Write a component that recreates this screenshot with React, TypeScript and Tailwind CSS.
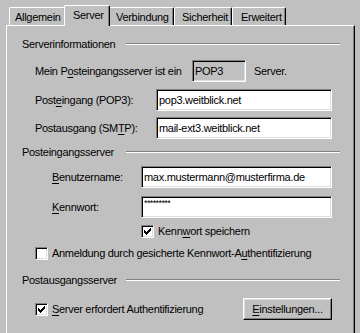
import type { ReactNode } from 'react';

const sunken =
  'border border-t-[#808080] border-l-[#808080] border-r-white border-b-white shadow-[inset_1px_1px_0_#000,inset_-1px_-1px_0_#dfdfdf]';

function U({ children }: { children: ReactNode }) {
  return <span className="underline underline-offset-[2px]">{children}</span>;
}

function Tab({ label, pl, w, active }: { label: string; pl: string; w: string; active?: boolean }) {
  if (active) {
    return (
      <div
        className={`relative z-10 -mx-[2px] -mb-[1px] h-[21px] ${w} ${pl} rounded-t-[2px] border-t border-l border-r border-t-white border-l-white border-r-black bg-[#c0c0c0] pt-[1px] shadow-[inset_-1px_0_0_#808080]`}
      >
        <span className="leading-[14px]">{label}</span>
      </div>
    );
  }
  return (
    <div
      className={`h-[18px] ${w} ${pl} rounded-t-[2px] border-t border-l border-r border-t-white border-l-white border-r-black pt-[1px] shadow-[inset_-1px_0_0_#808080]`}
    >
      <span className="leading-[14px]">{label}</span>
    </div>
  );
}

function Heading({ children, mt }: { children: ReactNode; mt: string }) {
  return (
    <div className={`${mt} flex h-[14px] items-center pl-[15px] pr-[14px]`}>
      <span className="w-[104px] shrink-0 leading-[14px]">{children}</span>
      <div className="h-0 flex-1 border-t border-b border-t-[#808080] border-b-white" />
    </div>
  );
}

function Field({ value, w, small }: { value: string; w: string; small?: boolean }) {
  return (
    <div className={`flex h-[22px] ${w} items-center bg-white pl-[2px] ${sunken}`}>
      {small ? (
        <span className="self-start pt-[2px] text-[9px] leading-[9px] tracking-[-0.6px]">{value}</span>
      ) : (
        <span>{value}</span>
      )}
    </div>
  );
}

function Check({ checked }: { checked?: boolean }) {
  return (
    <div className={`h-[13px] w-[13px] shrink-0 bg-white ${sunken}`}>
      {checked && (
        <svg width="11" height="11" viewBox="0 0 11 11" shapeRendering="crispEdges">
          <path
            d="M2 4h1v3h-1z M3 5h1v3h-1z M4 6h1v3h-1z M5 5h1v3h-1z M6 4h1v3h-1z M7 3h1v3h-1z M8 2h1v3h-1z"
            fill="#000"
          />
        </svg>
      )}
    </div>
  );
}

export default function App() {
  return (
    <div className="h-[333px] w-[360px] overflow-hidden bg-[#c0c0c0] font-['Liberation_Sans',Arial,sans-serif] text-[11px] tracking-[-0.3px] text-black">
      <div className="ml-[6px] mr-[5px] pt-[5px]">
        {/* tab strip */}
        <div className="flex h-[20px] items-end pl-[3px]">
          <Tab label="Allgemein" w="w-[57px]" pl="pl-[5px]" />
          <Tab label="Server" w="w-[46px]" pl="pl-[8px]" active />
          <Tab label="Verbindung" w="w-[66px]" pl="pl-[7px]" />
          <Tab label="Sicherheit" w="w-[58px]" pl="pl-[7px]" />
          <Tab label="Erweitert" w="w-[54px]" pl="pl-[8px]" />
        </div>

        <div className="h-[320px] border-t border-l border-r border-t-white border-l-white border-r-black shadow-[inset_-1px_0_0_#808080]">
          <Heading mt="mt-[11px]">Serverinformationen</Heading>

          <div className="mt-[9px] flex h-[22px] items-center pl-[28px]">
            <span className="w-[157px] shrink-0">
              Mein P<U>o</U>steingangsserver ist ein
            </span>
            <div className={`flex h-[22px] w-[54px] items-center pl-[2px] ${sunken}`}>POP3</div>
            <span className="ml-[8px]">Server.</span>
          </div>

          <div className="mt-[7px] flex items-center pl-[28px]">
            <span className="w-[121px] shrink-0">
              Post<U>e</U>ingang (POP3):
            </span>
            <Field value="pop3.weitblick.net" w="w-[176px]" />
          </div>

          <div className="mt-[6px] flex items-center pl-[28px]">
            <span className="w-[121px] shrink-0">
              Postausgang (SM<U>T</U>P):
            </span>
            <Field value="mail-ext3.weitblick.net" w="w-[176px]" />
          </div>

          <Heading mt="mt-[6px]">Posteingangsserver</Heading>

          <div className="mt-[7px] flex items-center pl-[45px]">
            <span className="w-[89px] shrink-0">
              <U>B</U>enutzername:
            </span>
            <Field value="max.mustermann@musterfirma.de" w="w-[191px]" />
          </div>

          <div className="mt-[8px] flex items-center pl-[45px]">
            <span className="w-[89px] shrink-0">
              <U>K</U>ennwort:
            </span>
            <Field value="*********" w="w-[191px]" small />
          </div>

          <div className="mt-[7px] flex h-[13px] items-center pl-[134px]">
            <Check checked />
            <span className="ml-[4px]">
              Kenn<U>w</U>ort speichern
            </span>
          </div>

          <div className="mt-[9px] flex h-[13px] items-center pl-[28px]">
            <Check />
            <span className="ml-[4px]">
              Anmeldung durch gesicherte Kennwort-A<U>u</U>thentifizierung
            </span>
          </div>

          <Heading mt="mt-[13px]">Postausgangsserver</Heading>

          <div className="mt-[11px] flex h-[22px] items-center pl-[28px] pr-[22px]">
            <Check checked />
            <span className="ml-[4px]">
              <U>S</U>erver erfordert Authentifizierung
            </span>
            <button className="ml-auto flex h-[22px] w-[89px] items-center justify-center border border-t-white border-l-white border-r-black border-b-black shadow-[inset_-1px_-1px_0_#808080,inset_1px_1px_0_#dfdfdf]">
              <span>
                <U>E</U>instellungen...
              </span>
            </button>
          </div>
        </div>
      </div>
    </div>
  );
}
